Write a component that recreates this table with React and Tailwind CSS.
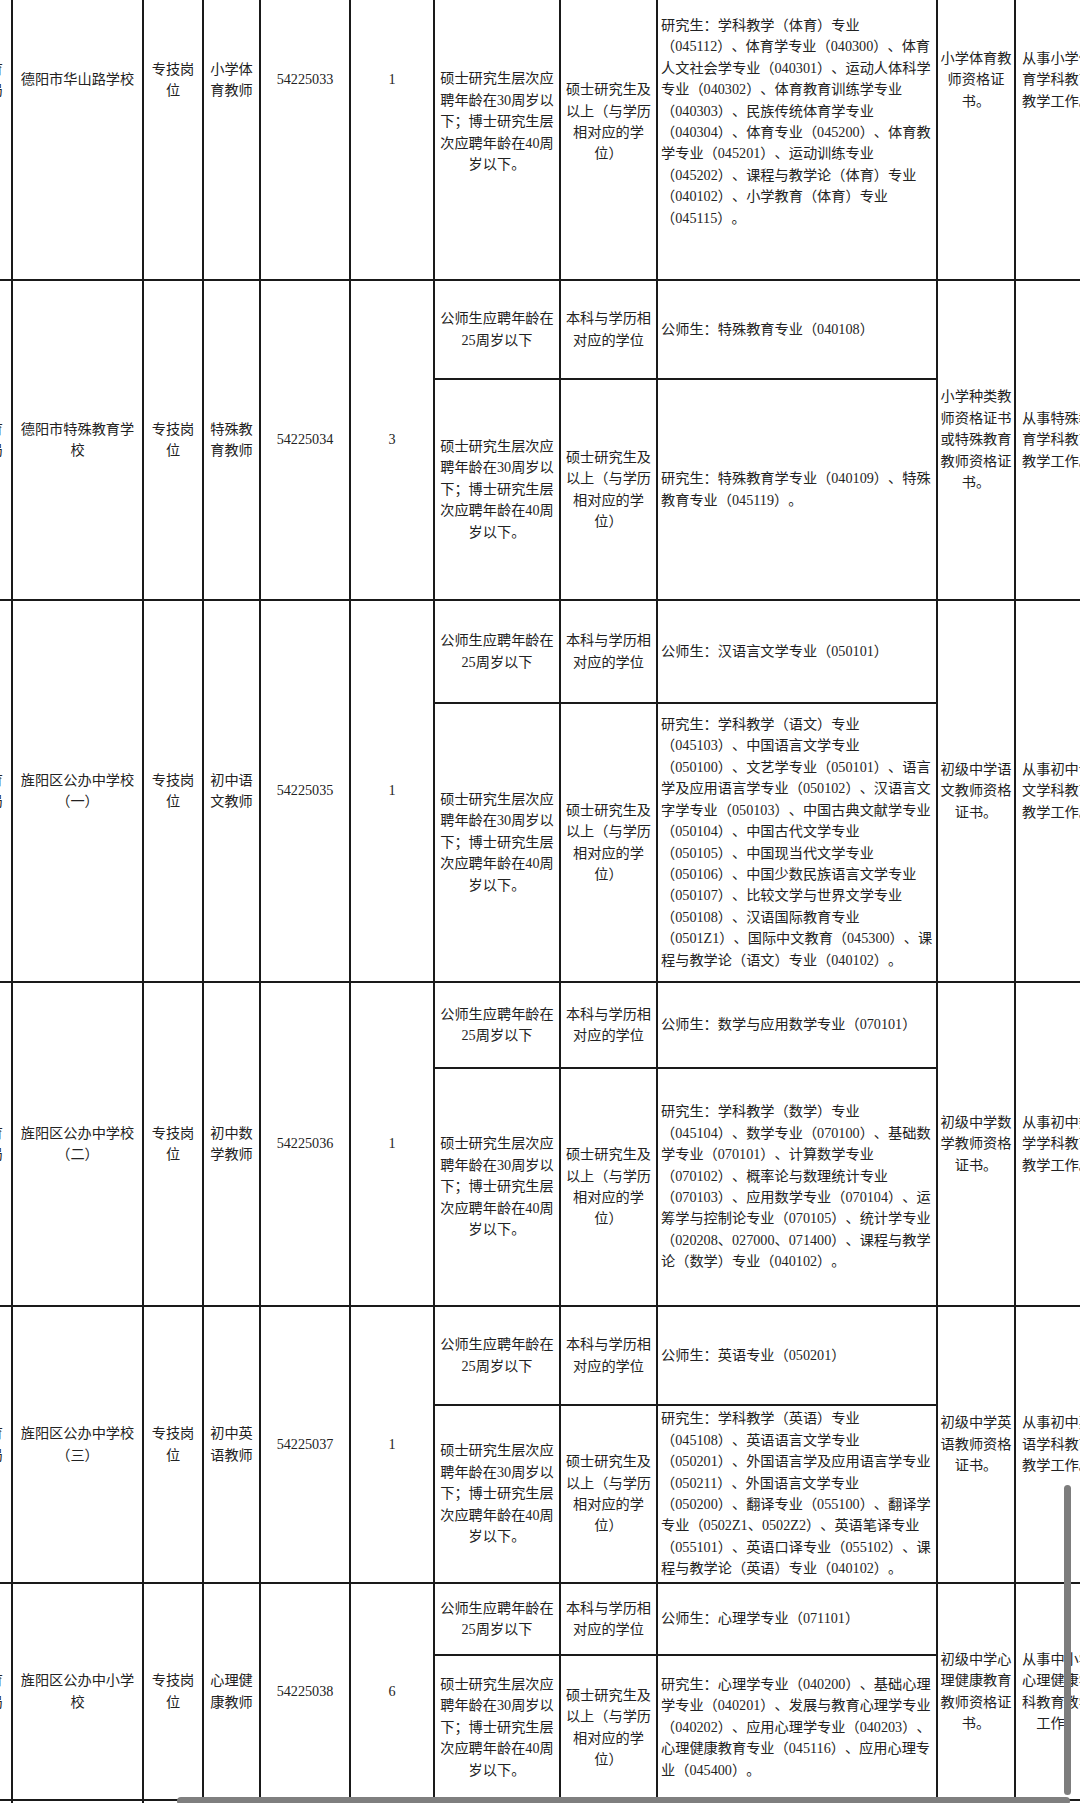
import React from "react";

// 招聘岗位一览表（截图局部）：表格上下左右都被裁切，只露出中间一段
const rows = [
  {
    dept: ["德阳市教育", "和体育局"],
    school: ["德阳市华山路学校"],
    type: ["专技岗", "位"],
    name: ["小学体", "育教师"],
    code: "54225033",
    count: "1",
    subs: [
      {
        age: ["公师生应聘年龄在", "25周岁以下"],
        degree: ["本科与学历相", "对应的学位"],
        major: ["公师生：体育教育专业（040201）"],
      },
      {
        age: ["硕士研究生层次应", "聘年龄在30周岁以", "下；博士研究生层", "次应聘年龄在40周", "岁以下。"],
        degree: ["硕士研究生及", "以上（与学历", "相对应的学", "位）"],
        major: [
          "研究生：学科教学（体育）专业",
          "（045112）、体育学专业（040300）、体育",
          "人文社会学专业（040301）、运动人体科学",
          "专业（040302）、体育教育训练学专业",
          "（040303）、民族传统体育学专业",
          "（040304）、体育专业（045200）、体育教",
          "学专业（045201）、运动训练专业",
          "（045202）、课程与教学论（体育）专业",
          "（040102）、小学教育（体育）专业",
          "（045115）。",
        ],
      },
    ],
    cert: ["小学体育教", "师资格证", "书。"],
    duty: ["从事小学体", "育学科教育", "教学工作。"],
  },
  {
    dept: ["德阳市教育", "和体育局"],
    school: ["德阳市特殊教育学", "校"],
    type: ["专技岗", "位"],
    name: ["特殊教", "育教师"],
    code: "54225034",
    count: "3",
    subs: [
      {
        age: ["公师生应聘年龄在", "25周岁以下"],
        degree: ["本科与学历相", "对应的学位"],
        major: ["公师生：特殊教育专业（040108）"],
      },
      {
        age: ["硕士研究生层次应", "聘年龄在30周岁以", "下；博士研究生层", "次应聘年龄在40周", "岁以下。"],
        degree: ["硕士研究生及", "以上（与学历", "相对应的学", "位）"],
        major: ["研究生：特殊教育学专业（040109）、特殊", "教育专业（045119）。"],
      },
    ],
    cert: ["小学种类教", "师资格证书", "或特殊教育", "教师资格证", "书。"],
    duty: ["从事特殊教", "育学科教育", "教学工作。"],
  },
  {
    dept: ["旌阳区教育", "和体育局"],
    school: ["旌阳区公办中学校", "（一）"],
    type: ["专技岗", "位"],
    name: ["初中语", "文教师"],
    code: "54225035",
    count: "1",
    subs: [
      {
        age: ["公师生应聘年龄在", "25周岁以下"],
        degree: ["本科与学历相", "对应的学位"],
        major: ["公师生：汉语言文学专业（050101）"],
      },
      {
        age: ["硕士研究生层次应", "聘年龄在30周岁以", "下；博士研究生层", "次应聘年龄在40周", "岁以下。"],
        degree: ["硕士研究生及", "以上（与学历", "相对应的学", "位）"],
        major: [
          "研究生：学科教学（语文）专业",
          "（045103）、中国语言文学专业",
          "（050100）、文艺学专业（050101）、语言",
          "学及应用语言学专业（050102）、汉语言文",
          "字学专业（050103）、中国古典文献学专业",
          "（050104）、中国古代文学专业",
          "（050105）、中国现当代文学专业",
          "（050106）、中国少数民族语言文学专业",
          "（050107）、比较文学与世界文学专业",
          "（050108）、汉语国际教育专业",
          "（0501Z1）、国际中文教育（045300）、课",
          "程与教学论（语文）专业（040102）。",
        ],
      },
    ],
    cert: ["初级中学语", "文教师资格", "证书。"],
    duty: ["从事初中语", "文学科教育", "教学工作。"],
  },
  {
    dept: ["旌阳区教育", "和体育局"],
    school: ["旌阳区公办中学校", "（二）"],
    type: ["专技岗", "位"],
    name: ["初中数", "学教师"],
    code: "54225036",
    count: "1",
    subs: [
      {
        age: ["公师生应聘年龄在", "25周岁以下"],
        degree: ["本科与学历相", "对应的学位"],
        major: ["公师生：数学与应用数学专业（070101）"],
      },
      {
        age: ["硕士研究生层次应", "聘年龄在30周岁以", "下；博士研究生层", "次应聘年龄在40周", "岁以下。"],
        degree: ["硕士研究生及", "以上（与学历", "相对应的学", "位）"],
        major: [
          "研究生：学科教学（数学）专业",
          "（045104）、数学专业（070100）、基础数",
          "学专业（070101）、计算数学专业",
          "（070102）、概率论与数理统计专业",
          "（070103）、应用数学专业（070104）、运",
          "筹学与控制论专业（070105）、统计学专业",
          "（020208、027000、071400）、课程与教学",
          "论（数学）专业（040102）。",
        ],
      },
    ],
    cert: ["初级中学数", "学教师资格", "证书。"],
    duty: ["从事初中数", "学学科教育", "教学工作。"],
  },
  {
    dept: ["旌阳区教育", "和体育局"],
    school: ["旌阳区公办中学校", "（三）"],
    type: ["专技岗", "位"],
    name: ["初中英", "语教师"],
    code: "54225037",
    count: "1",
    subs: [
      {
        age: ["公师生应聘年龄在", "25周岁以下"],
        degree: ["本科与学历相", "对应的学位"],
        major: ["公师生：英语专业（050201）"],
      },
      {
        age: ["硕士研究生层次应", "聘年龄在30周岁以", "下；博士研究生层", "次应聘年龄在40周", "岁以下。"],
        degree: ["硕士研究生及", "以上（与学历", "相对应的学", "位）"],
        major: [
          "研究生：学科教学（英语）专业",
          "（045108）、英语语言文学专业",
          "（050201）、外国语言学及应用语言学专业",
          "（050211）、外国语言文学专业",
          "（050200）、翻译专业（055100）、翻译学",
          "专业（0502Z1、0502Z2）、英语笔译专业",
          "（055101）、英语口译专业（055102）、课",
          "程与教学论（英语）专业（040102）。",
        ],
      },
    ],
    cert: ["初级中学英", "语教师资格", "证书。"],
    duty: ["从事初中英", "语学科教育", "教学工作。"],
  },
  {
    dept: ["旌阳区教育", "和体育局"],
    school: ["旌阳区公办中小学", "校"],
    type: ["专技岗", "位"],
    name: ["心理健", "康教师"],
    code: "54225038",
    count: "6",
    subs: [
      {
        age: ["公师生应聘年龄在", "25周岁以下"],
        degree: ["本科与学历相", "对应的学位"],
        major: ["公师生：心理学专业（071101）"],
      },
      {
        age: ["硕士研究生层次应", "聘年龄在30周岁以", "下；博士研究生层", "次应聘年龄在40周", "岁以下。"],
        degree: ["硕士研究生及", "以上（与学历", "相对应的学", "位）"],
        major: [
          "研究生：心理学专业（040200）、基础心理",
          "学专业（040201）、发展与教育心理学专业",
          "（040202）、应用心理学专业（040203）、",
          "心理健康教育专业（045116）、应用心理专",
          "业（045400）。",
        ],
      },
    ],
    cert: ["初级中学心", "理健康教育", "教师资格证", "书。"],
    duty: ["从事中小学", "心理健康学", "科教育教学", "工作。"],
  },
];

const Cell = ({ lines, span, align = "center" }) => {
  let alignCls = "items-center text-center";
  if (align === "left") alignCls = "items-start pl-[3px] text-left";
  if (align === "right") alignCls = "items-end pr-[8px] text-right";
  return (
    <div
      className={
        "bg-white flex flex-col justify-center overflow-hidden whitespace-nowrap " +
        (span ? "row-span-2 " : "") +
        alignCls
      }
    >
      {lines.map((line, i) => (
        <div key={i}>{line}</div>
      ))}
    </div>
  );
};

export default function App() {
  return (
    <div className="relative h-[1803px] w-[1080px] overflow-hidden bg-white">
      <div
        className="grid w-max -mt-[121px] -ml-[69px] p-[2px] gap-[2px] bg-[#1a1a1a] text-[14.2px] leading-[21.4px] text-[#222] font-['Liberation_Serif','Noto_Sans_CJK_SC',serif] [text-spacing-trim:space-all] grid-cols-[78px_129px_58px_55px_88px_82px_124px_95px_278px_76px_83px] grid-rows-[82px_314px_97px_219px_101px_277px_84px_236px_97px_176px_70px_143px_120px]"
      >
        {rows.map((r) => (
          <React.Fragment key={r.code}>
            <Cell lines={r.dept} span align="right" />
            <Cell lines={r.school} span />
            <Cell lines={r.type} span />
            <Cell lines={r.name} span />
            <Cell lines={[r.code]} span />
            <Cell lines={[r.count]} span />
            <Cell lines={r.subs[0].age} />
            <Cell lines={r.subs[0].degree} />
            <Cell lines={r.subs[0].major} align="left" />
            <Cell lines={r.cert} span />
            <Cell lines={r.duty} span />
            <Cell lines={r.subs[1].age} />
            <Cell lines={r.subs[1].degree} />
            <Cell lines={r.subs[1].major} align="left" />
          </React.Fragment>
        ))}
        {/* 下一行，只露出上边框 */}
        {Array.from({ length: 11 }).map((_, i) => (
          <div key={i} className="bg-white" />
        ))}
      </div>

      {/* 手机截图里的滚动条 */}
      <div className="absolute left-[1064px] top-[1485px] h-[310px] w-[7px] rounded-full bg-[#7d7d7d]" />
      <div className="absolute left-[177px] top-[1797px] h-[8px] w-[893px] rounded-full bg-[#7f7f7f]" />
    </div>
  );
}
